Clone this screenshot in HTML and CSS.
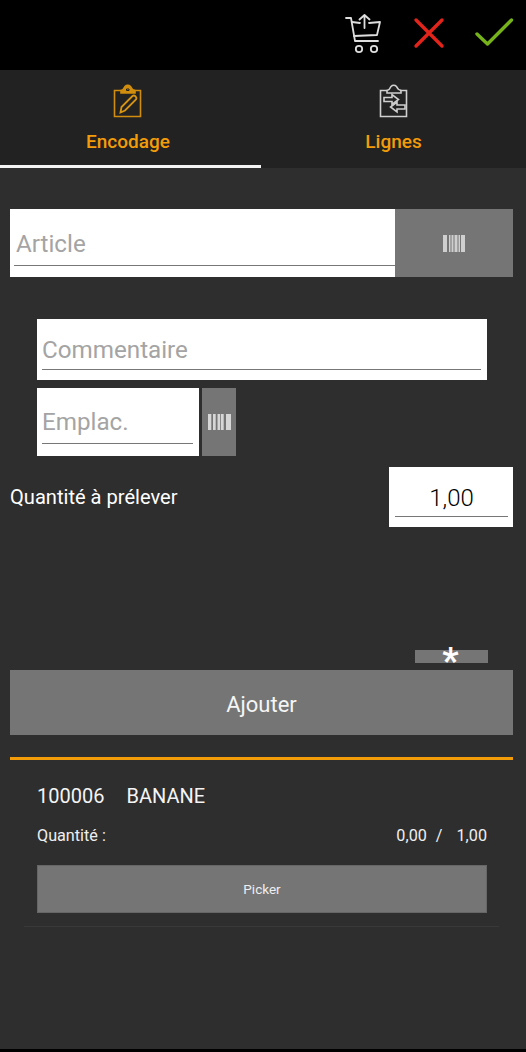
FILE: index.html
```html
<!DOCTYPE html>
<html lang="fr">
<head>
<meta charset="utf-8">
<title>Encodage</title>
<link rel="stylesheet" href="styles.css">
</head>
<body>
<div class="app">
  <header class="topbar">
    <svg class="ic-cart" viewBox="0 0 36 40" fill="none" stroke="#dedede" stroke-width="1.800" stroke-linecap="round" stroke-linejoin="round">
      <path d="M1 4h5l4 23h23"/>
      <path d="M7 8l8 1M24 9l11-1-3 13-23 1"/>
      <path d="M19.500 14V1M14.500 5.500l5-4.500 5 4.500"/>
      <circle cx="14" cy="35" r="3.200"/>
      <circle cx="29" cy="35" r="3.200"/>
    </svg>
    <svg class="ic-x" viewBox="0 0 32 32" fill="none" stroke="#e3241b" stroke-width="3.400" stroke-linecap="round"><path d="M3 3l26 26M29 3L3 29"/></svg>
    <svg class="ic-ok" viewBox="0 0 40 32" fill="none" stroke="#76b31b" stroke-width="3.400" stroke-linecap="round" stroke-linejoin="round"><path d="M2 17l10.500 10L36.500 3"/></svg>
  </header>

  <nav class="tabs">
    <div class="tab tab-active">
      <svg class="tab-ic" viewBox="0 0 30 34" fill="none" stroke="#d18d0e" stroke-width="1.600">
        <path d="M8 6.500H1.500v26h26v-26H21"/>
        <path d="M8 9V6.500c1.500-.5 3-1.500 4-4 1.500-1.500 4-1.500 5.500 0 1 2.500 2.500 3.500 4.500 4V9z" fill="#d18d0e"/>
        <path class="tab-hole" d="M13.500 5h2.500v1.500h-2.500z"/>
        <path d="M7.500 28.500l1-5.500 11-11c2-1.500 5 1.500 3.500 3.500l-11 11z" stroke="#d89510" stroke-width="1.800"/>
      </svg>
      <span class="tab-label">Encodage</span>
    </div>
    <div class="tab">
      <svg class="tab-ic" viewBox="0 0 30 34" fill="none" stroke="#cfcfcf" stroke-width="1.600">
        <path d="M8 6.500H1.500v26h26v-26H21"/>
        <path d="M8 9V6.500c1.500-.5 3-1.500 4-4 1.500-1.500 4-1.500 5.500 0 1 2.500 2.500 3.500 4.500 4V9z"/>
        <path d="M5 13.500h8v-3l6.500 5-6.500 5v-3H5z"/>
        <path d="M26 21h-8v-3l-6.500 5 6.500 5v-3h8z"/>
      </svg>
      <span class="tab-label">Lignes</span>
    </div>
  </nav>

  <main class="content">
    <div class="article-row">
      <div class="field field-article"><span class="ph ph-large">Article</span></div>
      <div class="scan scan-large">
        <svg class="bars bars-large" viewBox="0 0 22 17" fill="#cfcfcf"><path d="M0 0h4v17H0zM6 0h1.500v17H6zM8.500 0h2v17h-2zM11.500 0h3v17h-3zM15.500 0h1.500v17h-1.500zM18 0h4v17h-4z"/></svg>
      </div>
    </div>

    <div class="indent">
      <div class="field field-comment"><span class="ph">Commentaire</span></div>
      <div class="place-row">
        <div class="field field-place"><span class="ph ph-place">Emplac.</span></div>
        <div class="scan scan-small">
          <svg class="bars bars-small" viewBox="0 0 23 16" fill="#d6d6d6"><path d="M0 0h3.300v16H0zM5 0h2.700v16H5zM9.500 0h2.700v16H9.500zM13 0h2.700v16H13zM18 0h5v16h-5z"/></svg>
        </div>
      </div>
    </div>

    <div class="qty-row">
      <span class="qty-label">Quantité à prélever</span>
      <div class="field field-qty"><span class="qty-val">1,00</span></div>
    </div>

    <div class="star-row"><div class="star-btn"><span class="star">*</span></div></div>

    <div class="add-btn">Ajouter</div>
    <div class="rule"></div>

    <section class="item">
      <div class="item-title"><span>100006</span><span>BANANE</span></div>
      <div class="item-qty">
        <span>Quantité :</span>
        <span class="item-nums"><span>0,00</span><span class="slash">/</span><span>1,00</span></span>
      </div>
      <div class="picker">Picker</div>
    </section>
    <div class="sep"></div>
  </main>
  <div class="bottom"></div>
</div>
</body>
</html>
```
FILE: styles.css
```css
* { box-sizing: border-box; }
html, body { margin: 0; padding: 0; }
body { font-family: Roboto, "Liberation Sans", sans-serif; background: #2e2e2e; }
.app { width: 526px; height: 1052px; display: flex; flex-direction: column; overflow: hidden; background: #2e2e2e; color: #fff; }

.topbar { height: 70px; flex: none; background: #000; display: flex; align-items: flex-start; padding-left: 345px; }
.ic-cart { width: 36px; height: 40px; margin-top: 14px; }
.ic-x { width: 32px; height: 32px; margin: 17px 0 0 32px; }
.ic-ok { width: 40px; height: 32px; margin: 17px 0 0 30px; }

.tabs { height: 98px; flex: none; background: #222; display: flex; }
.tab { display: flex; flex-direction: column; align-items: center; padding-top: 14px; border-bottom: 3px solid transparent; }
.tab-active { width: 261px; padding-right: 5px; border-bottom-color: #f4f4f4; }
.tab + .tab { width: 265px; }
.tab-ic { width: 30px; height: 34px; display: block; }
.tab-hole { stroke: #222; stroke-width: 1; }
.tab-label { margin-top: 12px; font-size: 19px; line-height: 24px; font-weight: 500; color: #f39c0a; }

.content { flex: 1; display: flex; flex-direction: column; padding: 41px 13px 0 10px; }
.field { background: #fff; position: relative; display: flex; }
.field::after { content: ""; position: absolute; height: 1px; background: #777; }
.ph { color: #a4a4a4; font-size: 24.200px; }

.article-row { display: flex; height: 68px; }
.field-article { width: 385px; padding: 20px 0 0 6px; }
.field-article::after { left: 4px; right: 0; bottom: 11px; }
.ph-large { line-height: 30px; }
.scan { background: #757575; display: flex; align-items: center; justify-content: center; }
.scan-large { width: 118px; }
.bars-large { width: 22px; height: 17px; }

.indent { margin: 42px 0 0 27px; width: 450px; }
.field-comment { height: 61px; padding: 16px 0 0 5px; }
.field-comment::after { left: 5px; right: 6px; bottom: 10px; }
.field-comment .ph { line-height: 30px; }
.place-row { display: flex; margin-top: 8px; height: 68px; }
.field-place { width: 162px; padding: 19px 0 0 5px; }
.field-place::after { left: 5px; right: 6px; bottom: 12px; }
.ph-place { line-height: 30px; }
.scan-small { width: 34px; margin-left: 3px; }
.bars-small { width: 23px; height: 16px; }

.qty-row { display: flex; justify-content: space-between; margin-top: 11px; height: 60px; }
.qty-label { font-size: 20.100px; line-height: 60px; color: #fff; }
.field-qty { width: 124px; justify-content: center; padding: 16px 0 0 1px; }
.field-qty::after { left: 6px; right: 5px; bottom: 10px; }
.qty-val { color: #000; font-size: 24px; line-height: 30px; font-weight: 300; }

.star-row { display: flex; justify-content: flex-end; margin-top: 123px; padding-right: 25px; }
.star-btn { width: 73px; height: 13px; background: #757575; display: flex; justify-content: center; padding-right: 2px; }
.star { font-size: 36px; line-height: 36px; font-weight: 700; color: #fff; height: 13px; margin-top: -7px; }

.add-btn { height: 65px; margin-top: 7px; background: #757575; display: flex; align-items: center; justify-content: center; padding-top: 3px; font-size: 22px; color: #f5f5f5; }
.rule { height: 3px; margin-top: 22px; background: #f39c0a; }

.item { padding: 0 26px 0 27px; }
.item-title { display: flex; gap: 22px; margin-top: 23px; font-size: 20px; line-height: 26px; color: #f4f4f4; }
.item-qty { display: flex; justify-content: space-between; margin-top: 17px; font-size: 16.200px; line-height: 20px; color: #eee; }
.item-nums { display: flex; gap: 9px; }
.slash { margin-right: 5px; }
.picker { height: 48px; margin-top: 19px; background: #757575; border: 1px solid #666; display: flex; align-items: center; justify-content: center; font-size: 13.500px; color: #eee; }
.sep { height: 1px; margin: 13px 14px 0; background: #393939; }

.bottom { height: 3px; flex: none; background: #000; }
```
